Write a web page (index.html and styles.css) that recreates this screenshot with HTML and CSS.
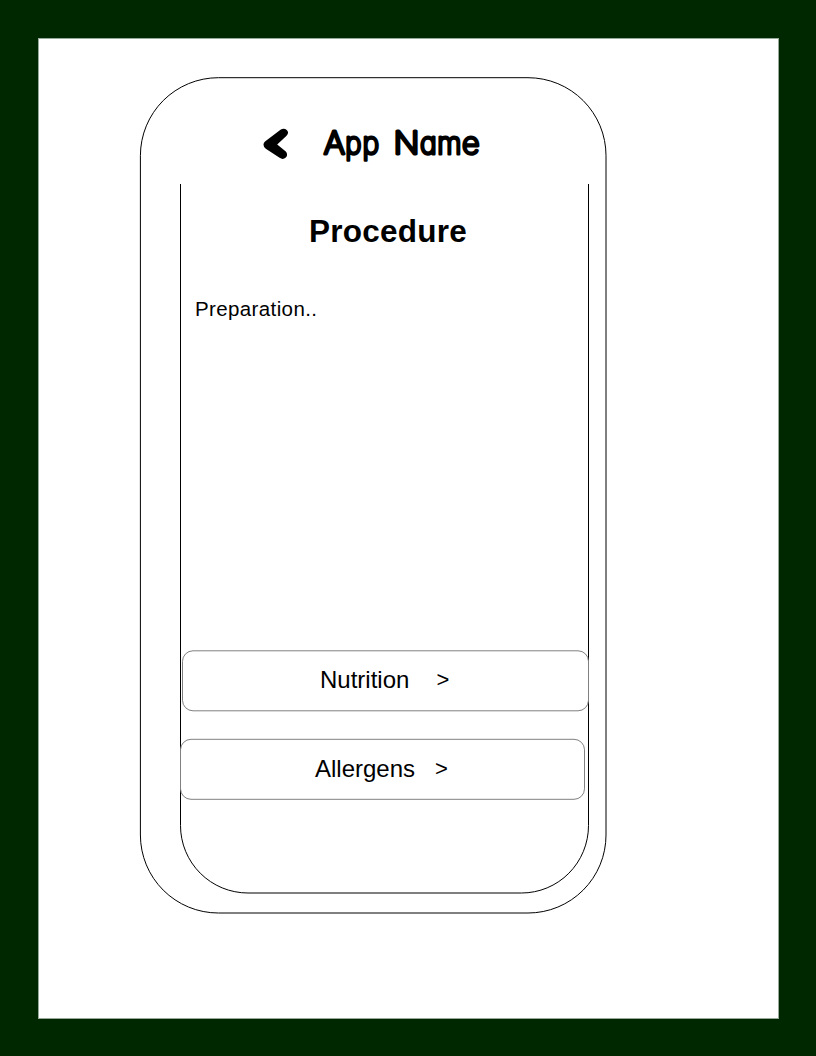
FILE: index.html
```html
<!DOCTYPE html>
<html lang="en">
<head>
<meta charset="utf-8">
<title>Procedure</title>
<link rel="stylesheet" href="styles.css">
</head>
<body>
<main class="page">
  <section class="phone">
    <svg class="frame" viewBox="139 77 469 838" aria-hidden="true">
      <rect x="140.4" y="77.7" width="465.6" height="835.3" rx="78"/>
      <path d="M180.5 184V825.5A67.5 67.5 0 0 0 248 893H521.5A67 67.5 0 0 0 588.5 825.5V184"/>
    </svg>
    <header class="header">
      <svg class="back" viewBox="262 127 28 34" aria-label="Back">
        <path d="M280.5 129.8Q284 127.6 287 130.3Q289.4 133.2 286.3 136L277.2 144.6L285.8 151.6Q288.4 154.7 285.8 157.6Q282.8 160.2 279.6 157.8L265.8 148.8Q261.6 145 265 141.4Z"/>
      </svg>
      <svg class="brand" viewBox="0 0 166 48">
        <text y="34"><tspan x="2.8" textLength="21.2" lengthAdjust="spacingAndGlyphs">A</tspan><tspan x="24.2" textLength="16.2" lengthAdjust="spacingAndGlyphs">p</tspan><tspan x="41.6" textLength="16.6" lengthAdjust="spacingAndGlyphs">p</tspan> <tspan x="72.6" textLength="26" lengthAdjust="spacingAndGlyphs">N</tspan><tspan x="99" textLength="16.7" lengthAdjust="spacingAndGlyphs">a</tspan><tspan x="116.2" textLength="24.2" lengthAdjust="spacingAndGlyphs">m</tspan><tspan x="141" textLength="17.6" lengthAdjust="spacingAndGlyphs">e</tspan></text>
      </svg>
    </header>
    <h1 class="title">Procedure</h1>
    <p class="preparation">Preparation..</p>
    <nav class="links">
      <a class="button nutrition"><svg class="outline" viewBox="0 0 408 62"><rect x="1.5" y=".8" width="406" height="60" rx="10.5"/></svg><span class="label">Nutrition</span><span class="arrow">&gt;</span></a>
      <a class="button allergens"><svg class="outline" viewBox="0 0 408 62"><rect x="1.5" y=".3" width="404" height="60" rx="10.5"/></svg><span class="label">Allergens</span><span class="arrow">&gt;</span></a>
    </nav>
  </section>
</main>
</body>
</html>
```

FILE: styles.css
```css
* { box-sizing: border-box; }
body { margin: 0; background: #002800; }
.page {
  width: 816px;
  height: 1056px;
  padding: 77px 0 0 139px;
  background: linear-gradient(#fff, #fff) 39px 39px / 739px 979px no-repeat,
    linear-gradient(#99a999, #99a999) 38px 38px / 741px 981px no-repeat,
    #002800;
  font-family: "Liberation Sans", Arial, sans-serif;
  color: #000;
}
.phone {
  position: relative;
  display: flex;
  flex-direction: column;
  width: 469px;
  height: 838px;
}
.frame {
  position: absolute;
  inset: 0;
  width: 469px;
  height: 838px;
  fill: none;
  stroke: #000;
  stroke-width: 1;
}
.header {
  display: flex;
  height: 107px;
  padding: 43px 0 0 123px;
  gap: 31px;
}
.back {
  width: 28px;
  height: 34px;
  margin-top: 7px;
  fill: #000;
}
.brand { width: 166px; height: 48px; }
.brand text {
  font-family: Inter, sans-serif;
  font-size: 30.5px;
  font-weight: 200;
  font-feature-settings: "cv11" 1;
  stroke: #000;
  stroke-width: 3;
  stroke-linecap: round;
  stroke-linejoin: round;
}
.title {
  margin: 29px 0 0 170px;
  font-size: 31.5px;
  letter-spacing: .25px;
  line-height: 36px;
}
.preparation {
  margin: 48px 0 0 56px;
  font-size: 20.5px;
  letter-spacing: .38px;
  line-height: 24px;
}
.links {
  display: flex;
  flex-direction: column;
  gap: 27px;
  margin-top: 329px;
}
.button {
  position: relative;
  display: flex;
  align-items: center;
  width: 408px;
  height: 62px;
  font-size: 24px;
  line-height: 28px;
}
.nutrition { margin-left: 42px; padding: 0 0 2px 139px; gap: 27px; }
.allergens { margin-left: 40px; padding: 0 0 2px 136px; gap: 20px; }
.outline {
  position: absolute;
  inset: 0;
  width: 408px;
  height: 62px;
  overflow: visible;
  fill: #fff;
  stroke: #808080;
  stroke-width: 1;
}
.label, .arrow { position: relative; }
.arrow { font-size: 22px; }
```
